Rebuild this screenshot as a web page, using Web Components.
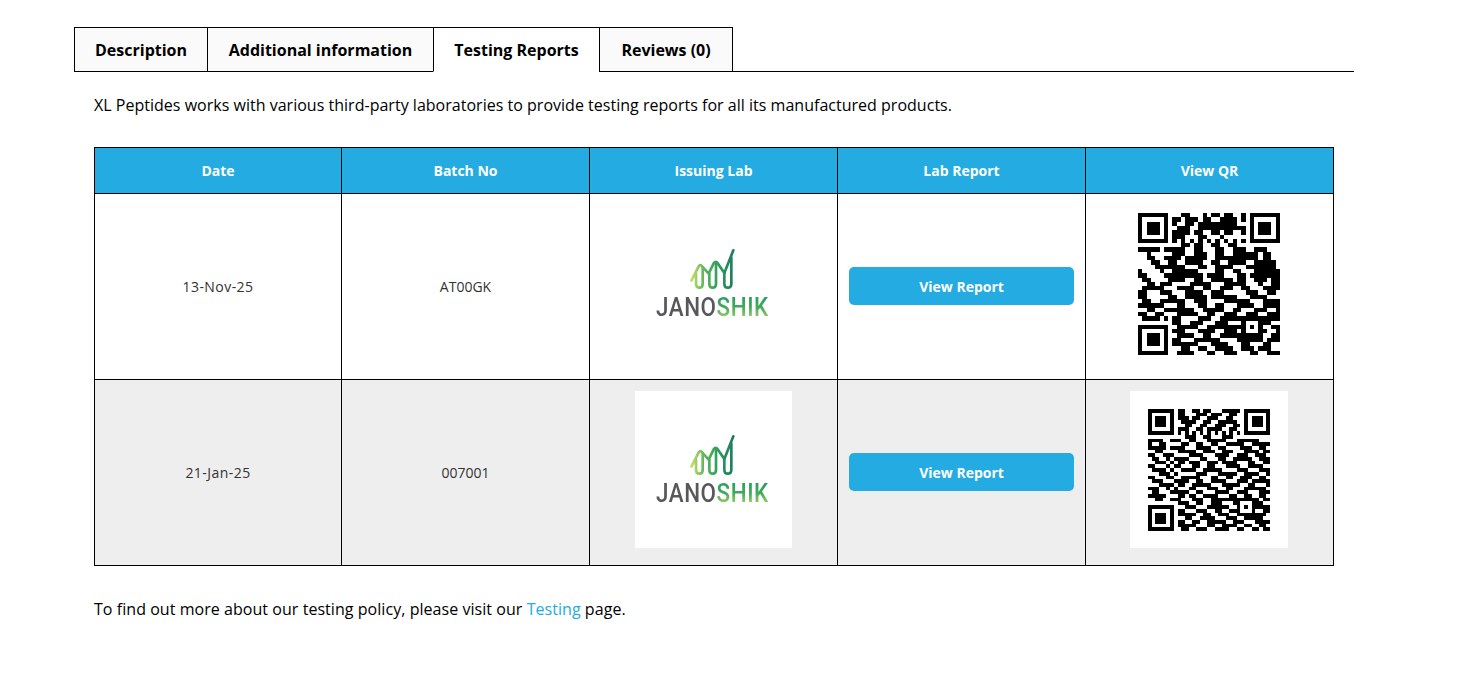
<!DOCTYPE html>
<html lang="en">
<head>
<meta charset="utf-8">
<title>Testing Reports</title>
<style>
  html, body { margin: 0; background: #fff; }
  body { font-family: "Open Sans", "Noto Sans", sans-serif; color: #000; }
</style>
</head>
<body>
<product-tabs>
  <tab-item slot="tabs" style="--w:134px">Description</tab-item>
  <tab-item slot="tabs" style="--w:227px">Additional information</tab-item>
  <tab-item slot="tabs" style="--w:167px" active>Testing Reports</tab-item>
  <tab-item slot="tabs" style="--w:134px">Reviews (0)</tab-item>

  <panel-text>XL Peptides works with various third-party laboratories to provide testing reports for all its manufactured products.</panel-text>

  <report-table>
    <report-row head>
      <report-cell>Date</report-cell>
      <report-cell>Batch No</report-cell>
      <report-cell>Issuing Lab</report-cell>
      <report-cell>Lab Report</report-cell>
      <report-cell>View QR</report-cell>
    </report-row>
    <report-row>
      <report-cell date>13-Nov-25</report-cell>
      <report-cell>AT00GK</report-cell>
      <report-cell><lab-logo></lab-logo></report-cell>
      <report-cell><view-button>View Report</view-button></report-cell>
      <report-cell><qr-code code="a" size="142"></qr-code></report-cell>
    </report-row>
    <report-row alt>
      <report-cell date>21-Jan-25</report-cell>
      <report-cell>007001</report-cell>
      <report-cell><lab-logo></lab-logo></report-cell>
      <report-cell><view-button>View Report</view-button></report-cell>
      <report-cell><qr-code code="b" size="122"></qr-code></report-cell>
    </report-row>
  </report-table>

  <panel-text foot>To find out more about our testing policy, please visit our <a href="#" style="color:#23abe2;text-decoration:none">Testing</a> page.</panel-text>
</product-tabs>

<script>
class ProductTabs extends HTMLElement {
  constructor() {
    super();
    const shadow = this.attachShadow({ mode: "open" });
    shadow.innerHTML = `
      <style>
        :host{display:block;width:1280px;padding-top:27px;margin-left:74px}
        nav{display:flex;border-bottom:1px solid #000;height:44px}
        .panel{padding:0 20px}
      </style>
      <nav><slot name="tabs"></slot></nav>
      <div class="panel"><slot></slot></div>`;
  }
}

class TabItem extends HTMLElement {
  constructor() {
    super();
    const shadow = this.attachShadow({ mode: "open" });
    shadow.innerHTML = `
      <style>
        :host{display:flex;align-items:center;justify-content:center;flex:none;box-sizing:border-box;
          width:var(--w);height:45px;margin-left:-1px;
          border:1px solid #000;background:#fafafa;
          font-size:16px;font-weight:700;cursor:pointer}
        :host(:first-child){margin-left:0}
        :host([active]){background:#fff;border-bottom-color:#fff}
      </style>
      <slot></slot>`;
  }
}

class PanelText extends HTMLElement {
  constructor() {
    super();
    const shadow = this.attachShadow({ mode: "open" });
    shadow.innerHTML = `
      <style>
        :host{display:block;margin:22px 0 31px;font-size:16px;line-height:22px;letter-spacing:.017px}
        :host([foot]){margin:32px 0 0;letter-spacing:.05px}
      </style>
      <slot></slot>`;
  }
}

class ReportTable extends HTMLElement {
  constructor() {
    super();
    const shadow = this.attachShadow({ mode: "open" });
    shadow.innerHTML = `
      <style>
        :host{display:block;width:1240px;border-bottom:1px solid #000;font-size:14px;color:#333}
      </style>
      <slot></slot>`;
  }
}

class ReportRow extends HTMLElement {
  constructor() {
    super();
    const shadow = this.attachShadow({ mode: "open" });
    shadow.innerHTML = `
      <style>
        :host{display:grid;grid-template-columns:247px 248px 248px 248px 249px;height:186px;
          box-sizing:border-box;border-top:1px solid #000}
        :host([head]){height:46px;background:#23abe2;color:#fff;font-weight:700}
        :host([alt]){background:#eee}
      </style>
      <slot></slot>`;
  }
}

class ReportCell extends HTMLElement {
  constructor() {
    super();
    const shadow = this.attachShadow({ mode: "open" });
    shadow.innerHTML = `
      <style>
        :host{display:flex;align-items:center;justify-content:center;box-sizing:border-box;
          padding:0 11px;border-left:1px solid #000;text-align:center}
        :host(:last-child){border-right:1px solid #000}
        :host([date]){letter-spacing:.45px}
      </style>
      <slot></slot>`;
  }
}

class ViewButton extends HTMLElement {
  constructor() {
    super();
    const shadow = this.attachShadow({ mode: "open" });
    shadow.innerHTML = `
      <style>
        :host{display:flex;align-items:center;justify-content:center;box-sizing:border-box;width:225px;height:38px;
          margin-bottom:1px;padding-top:1px;
          border-radius:5px;background:#23abe2;color:#fff;font-size:14px;font-weight:700;cursor:pointer}
      </style>
      <slot></slot>`;
  }
}

class LabLogo extends HTMLElement {
  constructor() {
    super();
    const shadow = this.attachShadow({ mode: "open" });
    // viewBox is in 3x px, same scale as the crop the marks were read from
    shadow.innerHTML = `
      <style>
        :host{display:block;width:157px;height:157px;margin-bottom:6px;background:#fff}
        svg{display:block}
      </style>
      <svg width="157" height="157" viewBox="15 18 471 471" role="img" aria-label="Janoshik">
        <defs>
          <linearGradient id="mark" x1="180" x2="315" y1="0" y2="0" gradientUnits="userSpaceOnUse">
            <stop offset="0" stop-color="#d5e06f"/>
            <stop offset=".3" stop-color="#62b85c"/>
            <stop offset=".65" stop-color="#2a9a5d"/>
            <stop offset="1" stop-color="#1c7a5e"/>
          </linearGradient>
          <linearGradient id="word" x1="0" x2="0" y1="0" y2="1">
            <stop offset="0" stop-color="#1f9a63"/>
            <stop offset=".5" stop-color="#3fa95a"/>
            <stop offset="1" stop-color="#c4dc6a"/>
          </linearGradient>
          <filter id="soft"><feGaussianBlur stdDeviation="1.2"/></filter>
        </defs>
        <g filter="url(#soft)">
          <g fill="none" stroke="url(#mark)" stroke-width="8" stroke-linecap="round" stroke-linejoin="round">
            <path d="M184 245L206 202Q211 194 216 202L236 224L251 193Q257 184 263 193L283 222L310 154"/>
            <path d="M198 224V254Q198 266 208 266Q218 266 218 254V205"/>
            <path d="M238 224V254Q238 266 248 266Q258 266 258 254V190"/>
            <path d="M283 222V254Q283 266 293 266Q304 266 304 254V176"/>
          </g>
          <text transform="scale(.84 1)" x="92.8" y="351" font-family="Roboto, 'Liberation Sans', sans-serif" font-size="80" font-weight="500"
            textLength="401" fill="#58595b">JANO<tspan fill="url(#word)">SHIK</tspan></text>
        </g>
      </svg>`;
  }
}

// modules read off the two reference codes, finder/timing/alignment are added in draw()
const QR_DATA = {
  a: [
    "00000000 00110001011011001","00000000 11011101100111101",
    "00000000 10011011111111100","00000000 01110011111111111",
    "00000000 11110110011011001","00000000 11100011000100000",
    "00000000 11011001100110011","00000000 00110110011001100",
    "11111001111 00110001100 11100111000","00100000111 00111001100 11111101100",
    "00110001110 11111001111 11111101100","00011001100 11110011001 11100111110",
    "00001101111 00011001111 00011111110","10000110111 11100001100 11000111111",
    "11000011111 11110111100 01101111111","01100011111 00110011111 01100111011",
    "00110111000 01111100011 11100010011","01111100011 11001100111 00110001111",
    "11000111000 11110011100 00011100110","11000001100 11111011111 10001111000",
    "01100111111 00111000011 11110001111","11111100011 00011001100 01111001111",
    "00110001111 11001111100 11000111001","11001100011 11100110011 10011100111",
    "01111000110 00011100111 11111011111","00000000110 01110001110 00110011100",
    "00000000011 11100111111 11100110011","00000000111 00011110011 10001111001",
    "00000000011 11001100111 11001110011","00000000110 00111111000 01111110111",
    "00000000111 11100011110 00110001100","00000000001 10011001111 00111011100",
    "00000000011 11000110011 10001100111",
  ],
  b: [
    "00000000 11001101100011111","00000000 11000111011100110",
    "00000000 11101100111001100","00000000 01111001100111110",
    "00000000 00110011001110011","00000000 11100110111100110",
    "00000000 11001100110011001","00000000 00111001100011100",
    "11110011100 11000111110 00111111000","10011000011 00110011001 11110011111",
    "11111011110 00111100110 00011100110","00110000111 11001110011 10001111011",
    "11001110000 11110001111 00111001110","01100111111 00011000110 01111100111",
    "00111000110 11100111011 11000110011","11000111100 01100110001 11100111100",
    "01111000011 11001111100 00111000111","00011111000 00111000111 11001111001",
    "11000110011 11100011001 10011100110","01110001111 00110011110 00111011111",
    "00011100110 01111100011 11100110001","11100111000 11000111001 10001111110",
    "01100011111 00110001111 00111000111","11111000110 11001111000 11001100110",
    "00110011100 01110011111 11111011011","00000000111 00110011100 01100011100",
    "00000000001 11000111111 00110011111","00000000110 00111001100 11100110011",
    "00000000111 11001100111 00111001110","00000000001 10011110001 11001111100",
    "00000000110 01100111110 01110001111","00000000111 11000110011 11001100110",
    "00000000011 00111001111 00110011011",
  ],
};

class QrCode extends HTMLElement {
  constructor() {
    super();
    this.attachShadow({ mode: "open" });
  }

  connectedCallback() {
    const size = this.getAttribute("size");
    this.shadowRoot.innerHTML = `
      <style>
        :host{display:flex;align-items:center;justify-content:center;width:158px;height:157px;
          margin:0 1px 6px 0;background:#fff}
        svg{display:block}
      </style>
      <svg width="${size}" height="${size}" viewBox="0 0 33 33" shape-rendering="crispEdges" role="img" aria-label="QR code">
        <path d="${this.draw(QR_DATA[this.getAttribute("code")])}"/>
      </svg>`;
  }

  draw(rows) {
    const n = 33;
    const m = rows.map((r) => [...r.replace(/ /g, "").padEnd(n, "0").slice(0, n)].map(Number));
    const square = (x, y, s, v) => {
      for (let j = 0; j < s; j++) for (let i = 0; i < s; i++) m[y + j][x + i] = v;
    };
    for (let i = 8; i < 25; i++) m[6][i] = m[i][6] = i % 2 ? 0 : 1;
    [[0, 0], [26, 0], [0, 26]].forEach(([x, y]) => {
      square(Math.max(x - 1, 0), Math.max(y - 1, 0), 8, 0);
      square(x, y, 7, 1);
      square(x + 1, y + 1, 5, 0);
      square(x + 2, y + 2, 3, 1);
    });
    square(24, 24, 5, 1);
    square(25, 25, 3, 0);
    m[26][26] = 1;
    let d = "";
    m.forEach((row, y) => {
      row.forEach((v, x) => {
        if (v) d += `M${x} ${y}h1v1h-1z`;
      });
    });
    return d;
  }
}

customElements.define("product-tabs", ProductTabs);
customElements.define("tab-item", TabItem);
customElements.define("panel-text", PanelText);
customElements.define("report-table", ReportTable);
customElements.define("report-row", ReportRow);
customElements.define("report-cell", ReportCell);
customElements.define("view-button", ViewButton);
customElements.define("lab-logo", LabLogo);
customElements.define("qr-code", QrCode);
</script>
</body>
</html>
